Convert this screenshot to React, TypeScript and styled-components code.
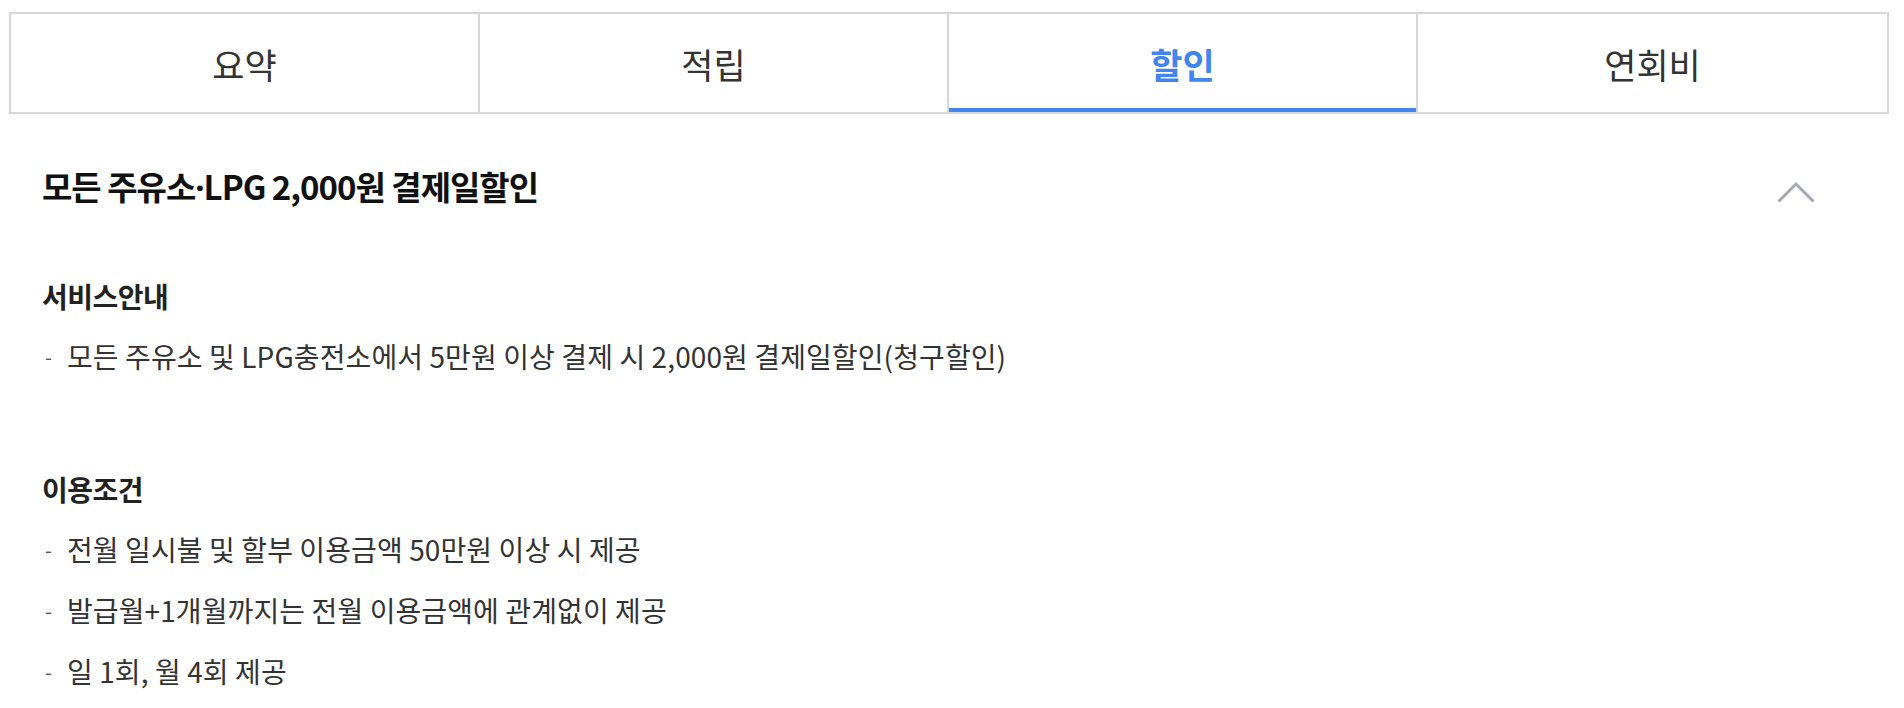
import React from "react";
import styled, { createGlobalStyle } from "styled-components";

const Global = createGlobalStyle`
  html, body { margin: 0; padding: 0; background: #fff; }
  body { font-family: "Noto Sans CJK KR", "Noto Sans", sans-serif; color: #333; }
  * { box-sizing: border-box; }
`;

const Page = styled.div`
  width: 1880px;
  margin-left: 9px;
  padding-top: 12px;
`;

const TabBar = styled.div`
  display: grid;
  grid-template-columns: repeat(4, 1fr);
  border: 2px solid #d6d6db;
`;

const Tab = styled.button<{ $active?: boolean }>`
  position: relative;
  height: 98px;
  border: 0;
  border-right: 2px solid #d6d6db;
  background: #fff;
  font-family: inherit;
  font-size: 35px;
  letter-spacing: 0;
  font-weight: ${(p) => (p.$active ? 700 : 400)};
  color: ${(p) => (p.$active ? "#4285f0" : "#333")};
  padding: 0;
  cursor: pointer;
  &:last-child { border-right: 0; }
  &::after {
    content: "";
    display: ${(p) => (p.$active ? "block" : "none")};
    position: absolute;
    left: 0;
    right: 0;
    bottom: 0;
    height: 4px;
    background: #4285f0;
  }
`;

const Section = styled.section`
  padding: 0 74px 0 33px;
`;

const Header = styled.div`
  display: flex;
  align-items: center;
  justify-content: space-between;
  margin-top: 40px;
  height: 66px;
`;

const Title = styled.h2`
  margin: 0;
  font-size: 33px;
  font-weight: 700;
  letter-spacing: -1px;
  color: #111;
  line-height: 66px;
`;

const Dot = styled.span`
  font-family: "Noto Sans", sans-serif;
`;

const Chevron = styled.svg`
  width: 38px;
  height: 22px;
  margin-top: 10px;
`;

const Body = styled.div`
  padding-top: 56px;
`;

const Heading = styled.h3<{ $gap?: number }>`
  margin: ${(p) => p.$gap ?? 0}px 0 0;
  font-size: 28px;
  font-weight: 700;
  letter-spacing: -0.5px;
  color: #222;
  line-height: 40px;
`;

const List = styled.ul`
  list-style: none;
  margin: 10px 0 0;
  padding: 0;
`;

const Item = styled.li`
  display: flex;
  font-size: 28px;
  letter-spacing: 0.1px;
  line-height: 61px;
  color: #333;
  &::before {
    content: "-";
    width: 22px;
    padding-left: 3px;
    font-size: 20px;
    color: #555;
  }
`;

const tabs = ["요약", "적립", "할인", "연회비"];

export default function App() {
  return (
    <>
      <Global />
      <Page>
        <TabBar>
          {tabs.map((t) => (
            <Tab key={t} $active={t === "할인"}>
              {t}
            </Tab>
          ))}
        </TabBar>
        <Section>
          <Header>
            <Title>
              모든 주유소<Dot>·</Dot>LPG 2,000원 결제일할인
            </Title>
            <Chevron viewBox="0 0 38 22">
              <polyline
                points="1.5,20.5 19,3 36.5,20.5"
                fill="none"
                stroke="#a6a8b1"
                strokeWidth="3"
              />
            </Chevron>
          </Header>
          <Body>
            <Heading>서비스안내</Heading>
            <List>
              <Item>모든 주유소 및 LPG충전소에서 5만원 이상 결제 시 2,000원 결제일할인(청구할인)</Item>
            </List>
            <Heading $gap={82}>이용조건</Heading>
            <List>
              <Item>전월 일시불 및 할부 이용금액 50만원 이상 시 제공</Item>
              <Item>발급월+1개월까지는 전월 이용금액에 관계없이 제공</Item>
              <Item>일 1회, 월 4회 제공</Item>
            </List>
          </Body>
        </Section>
      </Page>
    </>
  );
}
